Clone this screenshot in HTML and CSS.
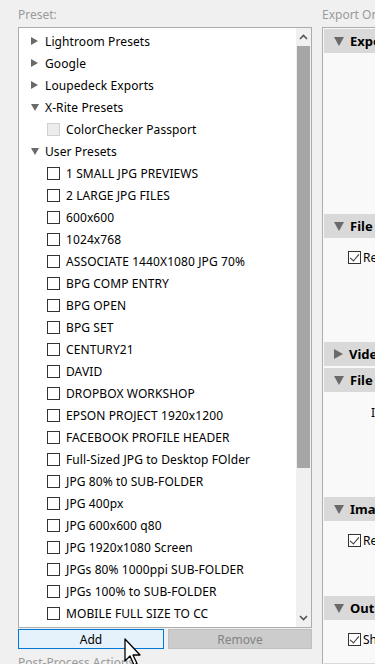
FILE: index.html
```
<!DOCTYPE html>
<html lang="en">
<head>
  <meta charset="UTF-8" />
  <meta name="viewport" content="width=device-width, initial-scale=1.0"/>
  <title>Export Presets</title>
  <link rel="stylesheet" href="styles.css">
</head>
<body>

<div class="dialog">
  <div class="left-col">
    <div class="label">Preset:</div>

    <div class="list-box">
      <div class="list">
        <div class="row group"><span class="tri right"></span>Lightroom Presets</div>
        <div class="row group"><span class="tri right"></span>Google</div>
        <div class="row group"><span class="tri right"></span>Loupedeck Exports</div>
        <div class="row group"><span class="tri down"></span>X-Rite Presets</div>
        <div class="row item"><span class="box disabled"></span>ColorChecker Passport</div>
        <div class="row group"><span class="tri down"></span>User Presets</div>
        <div class="row item"><span class="box"></span>1 SMALL JPG PREVIEWS</div>
        <div class="row item"><span class="box"></span>2 LARGE JPG FILES</div>
        <div class="row item"><span class="box"></span>600x600</div>
        <div class="row item"><span class="box"></span>1024x768</div>
        <div class="row item"><span class="box"></span>ASSOCIATE 1440X1080 JPG 70%</div>
        <div class="row item"><span class="box"></span>BPG COMP ENTRY</div>
        <div class="row item"><span class="box"></span>BPG OPEN</div>
        <div class="row item"><span class="box"></span>BPG SET</div>
        <div class="row item"><span class="box"></span>CENTURY21</div>
        <div class="row item"><span class="box"></span>DAVID</div>
        <div class="row item"><span class="box"></span>DROPBOX WORKSHOP</div>
        <div class="row item"><span class="box"></span>EPSON PROJECT 1920x1200</div>
        <div class="row item"><span class="box"></span>FACEBOOK PROFILE HEADER</div>
        <div class="row item"><span class="box"></span>Full-Sized JPG to Desktop FOlder</div>
        <div class="row item"><span class="box"></span>JPG 80% t0 SUB-FOLDER</div>
        <div class="row item"><span class="box"></span>JPG 400px</div>
        <div class="row item"><span class="box"></span>JPG 600x600 q80</div>
        <div class="row item"><span class="box"></span>JPG 1920x1080 Screen</div>
        <div class="row item"><span class="box"></span>JPGs 80% 1000ppi SUB-FOLDER</div>
        <div class="row item"><span class="box"></span>JPGs 100% to SUB-FOLDER</div>
        <div class="row item"><span class="box"></span>MOBILE FULL SIZE TO CC</div>
      </div>

      <div class="scrollbar">
        <div class="arrow">
          <svg width="9" height="6" viewBox="0 0 9 6"><path d="M1 5 L4.5 1.5 L8 5" fill="none" stroke="#555" stroke-width="1.6"/></svg>
        </div>
        <div class="thumb"></div>
        <div class="track"></div>
        <div class="arrow">
          <svg width="9" height="6" viewBox="0 0 9 6"><path d="M1 1 L4.5 4.5 L8 1" fill="none" stroke="#555" stroke-width="1.6"/></svg>
        </div>
      </div>
    </div>

    <div class="buttons">
      <button class="btn add">Add</button>
      <button class="btn remove" disabled>Remove</button>
    </div>
    <div class="label post">Post-Process Actions:</div>
  </div>

  <div class="right-col">
    <div class="label">Export One</div>
    <div class="panel">
      <div class="sec-head"><span class="tri down big"></span>Export Location</div>
      <div class="sec-body" style="height: 161px"></div>

      <div class="sec-head"><span class="tri down big"></span>File Naming</div>
      <div class="sec-body" style="height: 104px">
        <div class="check-line"><span class="box checked"></span>Rename To:</div>
      </div>

      <div class="sec-head"><span class="tri right big"></span>Video</div>
      <div class="sec-gap"></div>
      <div class="sec-head"><span class="tri down big"></span>File Settings</div>
      <div class="sec-body" style="height: 105px">
        <div class="field-label">Image Format:</div>
      </div>

      <div class="sec-head"><span class="tri down big"></span>Image Sizing</div>
      <div class="sec-body" style="height: 75px">
        <div class="check-line"><span class="box checked"></span>Resize to Fit:</div>
      </div>

      <div class="sec-head"><span class="tri down big"></span>Output Sharpening</div>
      <div class="sec-body" style="height: 43px">
        <div class="check-line"><span class="box checked"></span>Sharpen For:</div>
      </div>

      <div class="sec-head"><span class="tri down big"></span>Metadata</div>
    </div>
  </div>
</div>

<svg class="cursor" width="20" height="30" viewBox="0 0 20 30">
  <path d="M1 1 L1 23 L6 18 L10 27 L13 25.5 L9 17 L16 17 Z" fill="#fff" stroke="#000" stroke-width="1.3" stroke-linejoin="round"/>
</svg>

</body>
</html>
```

FILE: styles.css
```
body {
  margin: 0;
  background-color: #f0f0f0;
  font-family: 'Noto Sans', 'Open Sans', sans-serif;
  font-size: 12px;
  color: #000;
  height: 664px;
  overflow: hidden;
  position: relative;
}

.dialog {
  display: flex;
  padding-left: 18px;
}

.left-col {
  width: 294px;
  flex-shrink: 0;
}

.right-col {
  margin-left: 10px;
  flex: 1;
  min-width: 0;
}

.label {
  color: #9a9a9a;
  height: 27px;
  line-height: 30px;
  white-space: nowrap;
}

.label.post {
  height: auto;
  line-height: 16px;
  margin-top: 6px;
}

.list-box {
  display: flex;
  height: 599px;
  border: 1px solid #adadad;
  background-color: #fff;
}

.list {
  flex: 1;
  padding-top: 2px;
  overflow: hidden;
}

.row {
  height: 22px;
  display: flex;
  align-items: center;
  white-space: nowrap;
  letter-spacing: 0.1px;
}

.row.group {
  padding-left: 12px;
}

.row.item {
  padding-left: 28px;
}

.tri {
  width: 0;
  height: 0;
  margin-right: 7px;
}

.tri.right {
  border-top: 4px solid transparent;
  border-bottom: 4px solid transparent;
  border-left: 7px solid #6a6a6a;
}

.tri.down {
  border-left: 4px solid transparent;
  border-right: 4px solid transparent;
  border-top: 7px solid #6a6a6a;
  margin-right: 6px;
}

.box {
  width: 11px;
  height: 11px;
  border: 1px solid #333;
  background-color: #fff;
  margin-right: 6px;
  flex-shrink: 0;
}

.box.disabled {
  border-color: #d0d0d0;
  background-color: #ececec;
}

.box.checked {
  position: relative;
}

.box.checked::after {
  content: "";
  position: absolute;
  left: 3px;
  top: 0px;
  width: 4px;
  height: 8px;
  border-right: 1.5px solid #333;
  border-bottom: 1.5px solid #333;
  transform: rotate(40deg);
}

.scrollbar {
  width: 15px;
  display: flex;
  flex-direction: column;
  background-color: #f0f0f0;
}

.arrow {
  height: 18px;
  display: flex;
  align-items: center;
  justify-content: center;
}

.thumb {
  height: 422px;
  background-color: #a6a6a6;
  margin: 0 1px;
}

.track {
  flex: 1;
}

.buttons {
  display: flex;
  gap: 4px;
  margin-top: 1px;
}

.btn {
  height: 20px;
  padding: 0;
  font-family: inherit;
  font-size: 12px;
  border: 1px solid #adadad;
}

.btn.add {
  width: 146px;
  background-color: #e5f1fb;
  border-color: #0078d7;
  color: #000;
}

.btn.remove {
  width: 144px;
  background-color: #cccccc;
  border-color: #bfbfbf;
  color: #838383;
}

.panel {
  height: 700px;
  border: 1px solid #adadad;
  border-right: none;
  background-color: #f9f9f9;
  padding: 1px 0 0 1px;
}

.sec-head {
  height: 24px;
  background-color: #d9d9d9;
  display: flex;
  align-items: center;
  padding-left: 10px;
  font-weight: bold;
  font-size: 13px;
  white-space: nowrap;
  overflow: hidden;
}

.tri.big.right {
  border-top: 5px solid transparent;
  border-bottom: 5px solid transparent;
  border-left: 9px solid #6a6a6a;
  margin-right: 6px;
}

.tri.big.down {
  border-left: 5px solid transparent;
  border-right: 5px solid transparent;
  border-top: 9px solid #6a6a6a;
  margin-right: 6px;
}

.sec-gap {
  height: 2px;
}

.check-line {
  display: flex;
  align-items: center;
  padding: 11px 0 0 24px;
  white-space: nowrap;
}

.check-line .box {
  margin-right: 2px;
}

.field-label {
  padding: 12px 0 0 47px;
  white-space: nowrap;
}

.cursor {
  position: absolute;
  left: 124px;
  top: 638px;
}
```
